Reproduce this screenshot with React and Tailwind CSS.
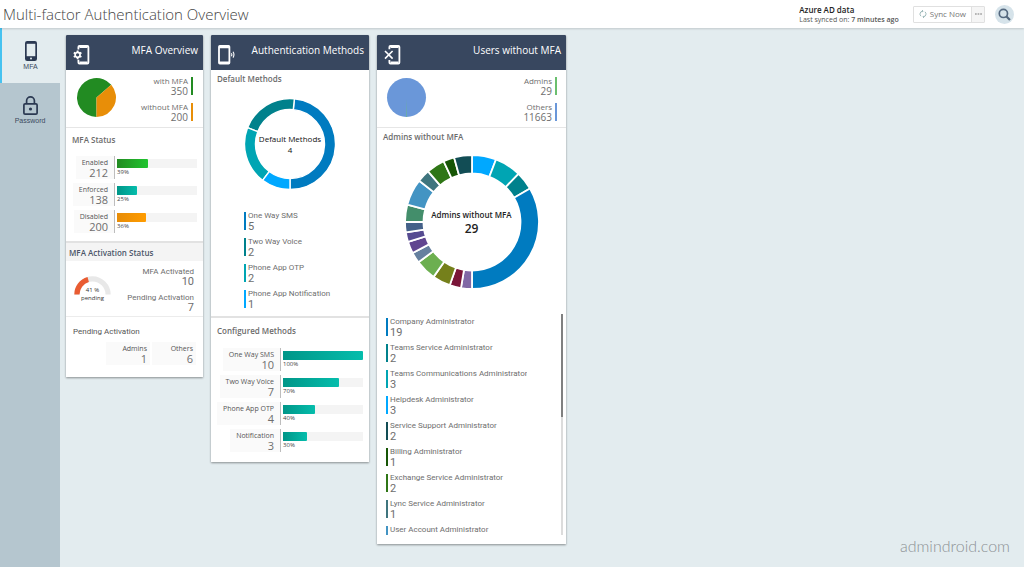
import React from "react";

const point = (cx, cy, r, deg) => {
  const a = ((deg - 90) * Math.PI) / 180;
  return `${(cx + r * Math.cos(a)).toFixed(2)} ${(cy + r * Math.sin(a)).toFixed(2)}`;
};

const ringPath = (c, outer, inner, from, to) => {
  const large = to - from > 180 ? 1 : 0;
  return `M${point(c, c, outer, from)} A${outer} ${outer} 0 ${large} 1 ${point(c, c, outer, to)} L${point(c, c, inner, to)} A${inner} ${inner} 0 ${large} 0 ${point(c, c, inner, from)} Z`;
};

const piePath = (c, r, from, to) =>
  `M${c} ${c} L${point(c, c, r, from)} A${r} ${r} 0 ${to - from > 180 ? 1 : 0} 1 ${point(c, c, r, to)} Z`;

const defaultMethods = [
  { name: "One Way SMS", value: 5, color: "#007bc0", from: 5.5, to: 180 },
  { name: "Two Way Voice", value: 2, color: "#00818c", from: 291, to: 365.5 },
  { name: "Phone App OTP", value: 2, color: "#00a5b3", from: 217, to: 291 },
  { name: "Phone App Notification", value: 1, color: "#00a8ff", from: 180, to: 217 },
];

const adminSlices = [
  ["#00a8ff", 0, 21],
  ["#00a5b3", 21, 44],
  ["#00818c", 44, 60],
  ["#007bc0", 60, 180],
  ["#8168a5", 180, 189.5],
  ["#7a1538", 189.5, 199.4],
  ["#75801b", 199.4, 215],
  ["#6caf50", 215, 233],
  ["#65809f", 233, 242.5],
  ["#614690", 242.5, 252.8],
  ["#564b91", 252.8, 261],
  ["#446189", 261, 270],
  ["#438e6b", 270, 285],
  ["#4394c3", 285, 308],
  ["#3f757e", 308, 319],
  ["#2f7616", 319, 335],
  ["#175606", 335, 344.5],
  ["#124d55", 344.5, 360],
];

const adminRoles = [
  { name: "Company Administrator", value: 19, color: "#007bc0" },
  { name: "Teams Service Administrator", value: 2, color: "#00818c" },
  { name: "Teams Communications Administrator", value: 3, color: "#00a5b3" },
  { name: "Helpdesk Administrator", value: 3, color: "#00a8ff" },
  { name: "Service Support Administrator", value: 2, color: "#124d55" },
  { name: "Billing Administrator", value: 1, color: "#175606" },
  { name: "Exchange Service Administrator", value: 2, color: "#2f7616" },
  { name: "Lync Service Administrator", value: 1, color: "#3f757e" },
  { name: "User Account Administrator", value: null, color: "#4394c3" },
];

const statusRows = [
  { name: "Enabled", value: 212, pct: 39, fill: "bg-linear-to-r from-[#228b22] to-[#1fc52f]" },
  { name: "Enforced", value: 138, pct: 25, fill: "bg-linear-to-r from-[#009688] to-[#05bdac]" },
  { name: "Disabled", value: 200, pct: 36, fill: "bg-linear-to-r from-[#e78c07] to-[#ff9c00]" },
];

const configuredRows = [
  { name: "One Way SMS", value: 10, pct: 100 },
  { name: "Two Way Voice", value: 7, pct: 70 },
  { name: "Phone App OTP", value: 4, pct: 40 },
  { name: "Notification", value: 3, pct: 30 },
].map((r) => ({ ...r, fill: "bg-linear-to-r from-[#009688] to-[#05bdac]" }));

function Card({ title, icon, width, children }) {
  return (
    <section className={`${width} shrink-0 bg-white shadow-[0_1px_2px_rgba(0,0,0,0.4)]`}>
      <header className="flex h-[35px] justify-between rounded-t-[1px] bg-[#38475f] pl-[7px] pr-[5px] text-white">
        <span className="pt-[10px]">{icon}</span>
        <h2 className="pt-2 text-[10px] leading-[14px]">{title}</h2>
      </header>
      {children}
    </section>
  );
}

function SectionTitle({ children }) {
  return <h3 className="text-[8px] font-semibold leading-[10px] text-[#6b6b6b]">{children}</h3>;
}

function Legend({ items }) {
  return (
    <dl className="flex flex-col items-end gap-[6px]">
      {items.map((i) => (
        <div key={i.name} className="flex h-5 items-start gap-[3px]">
          <div className="text-right">
            <dt className="text-[8px] leading-[8px]">{i.name}</dt>
            <dd className="text-[10px] leading-[13px]">{i.value}</dd>
          </div>
          <span className="h-[18px] w-[2px]" style={{ backgroundColor: i.color }} />
        </div>
      ))}
    </dl>
  );
}

function ValueList({ items }) {
  return (
    <ul className="flex flex-col gap-[6px] font-['Roboto',sans-serif]">
      {items.map((i) => (
        <li key={i.name} className="flex h-5 shrink-0 gap-[2px]">
          <span className="h-[18px] w-[2px] shrink-0" style={{ backgroundColor: i.color }} />
          <div className="whitespace-nowrap">
            <p className="text-[8px] leading-[8px]">{i.name}</p>
            <p className="text-[11px] leading-[13px]">{i.value}</p>
          </div>
        </li>
      ))}
    </ul>
  );
}

function BarRows({ rows, labelWidth }) {
  return (
    <ul className="flex flex-col gap-1">
      {rows.map((r) => (
        <li key={r.name} className="flex h-[23px]">
          <div className={`${labelWidth} flex shrink-0 justify-end border-r border-[#bdbdbd]`}>
            <div className="whitespace-nowrap bg-[#fafafa] pl-[6px] pr-[6px] pt-[2px] text-right">
              <p className="text-[7px] font-medium leading-[9px] text-[#555]">{r.name}</p>
              <p className="text-[11px] leading-[11px]">{r.value}</p>
            </div>
          </div>
          <div className="flex-1 pl-[2px] pt-[3px]">
            <div className="h-[9px] bg-[#f4f4f4]">
              <div className={`h-full rounded-r-[1px] ${r.fill}`} style={{ width: `${r.pct}%` }} />
            </div>
            <p className="text-[6px] leading-[9px] text-[#444]">{r.pct}%</p>
          </div>
        </li>
      ))}
    </ul>
  );
}

function GearPhone() {
  return (
    <svg width="17" height="20" viewBox="0 0 17 20" fill="none" stroke="#fff">
      <path d="M5.4 4.6V2Q5.4 1 6.4 1H14.4Q15.4 1 15.4 2V17.6Q15.4 18.6 14.4 18.6H6.4Q5.4 18.6 5.4 17.6V14.8" strokeWidth="1.8" />
      <path d="M6.5 2H14.5M6.5 17.4H14.5" strokeWidth="1.8" />
      <circle cx="4.6" cy="9.8" r="2.5" strokeWidth="1.7" />
      <path d="M4.6 5.4V7M4.6 12.6V14.2M.8 7.6L2.2 8.4M7 11.2L8.4 12M.8 12L2.2 11.2M7 8.4L8.4 7.6" strokeWidth="1.8" />
    </svg>
  );
}

function SignalPhone() {
  return (
    <svg width="17" height="20" viewBox="0 0 17 20" fill="none" stroke="#fff">
      <rect x="1" y="1" width="10.4" height="17.6" rx="0.8" strokeWidth="1.8" />
      <path d="M1 2.2H11.4M1 17.4H11.4" strokeWidth="2" />
      <path d="M13.4 8.2Q14.3 9.7 13.4 11.2M15 6.8Q16.9 9.7 15 12.6" strokeWidth="1.1" />
    </svg>
  );
}

function CrossPhone() {
  return (
    <svg width="17" height="20" viewBox="0 0 17 20" fill="none" stroke="#fff">
      <path d="M5.4 4.2V2Q5.4 1 6.4 1H14.4Q15.4 1 15.4 2V17.6Q15.4 18.6 14.4 18.6H6.4Q5.4 18.6 5.4 17.6V15" strokeWidth="1.8" />
      <path d="M6.5 2H14.5M6.5 17.4H14.5" strokeWidth="1.8" />
      <path d="M1 6L8.6 13.6M8.6 6L1 13.6" strokeWidth="1.6" />
    </svg>
  );
}

function Sidebar() {
  return (
    <nav className="w-[60px] shrink-0 bg-[#b5c6cf] font-['Liberation_Sans',Arial,sans-serif] text-[7px] leading-[8px] text-[#3c4a5e]">
      <a href="#mfa" className="flex h-[55px] flex-col items-center gap-[2px] border-l-2 border-[#46c2f0] bg-[#e3ecef] pr-[1px] pt-[13px]">
        <svg width="12" height="20" viewBox="0 0 12 20">
          <rect width="12" height="20" rx="2.2" fill="#2b3952" />
          <rect x="1.7" y="2.8" width="8.6" height="12.4" fill="#e3ecef" />
          <circle cx="6" cy="17.5" r="1" fill="#e3ecef" />
        </svg>
        MFA
      </a>
      <a href="#password" className="flex h-[55px] flex-col items-center gap-[2px] pt-[13px]">
        <svg width="15" height="19" viewBox="0 0 15 19" fill="none" stroke="#2b3952" strokeWidth="1.7">
          <rect x="0.9" y="7.9" width="13.2" height="10.2" rx="1.2" />
          <path d="M3.6 7.8V4.8A3.9 3.9 0 0 1 11.4 4.8V7.8" />
          <circle cx="7.5" cy="13" r="1.6" fill="#2b3952" stroke="none" />
        </svg>
        Password
      </a>
    </nav>
  );
}

function Header() {
  return (
    <header className="z-10 flex h-7 shrink-0 items-center bg-white pl-[3px] pr-[10px] shadow-[0_1px_2px_rgba(0,0,0,0.15)]">
      <h1 className="mr-auto text-[15px] font-[350] leading-5 text-[#444]">Multi-factor Authentication Overview</h1>
      <div className="mr-[14px] text-[7px] leading-[9px] text-[#555]">
        <p className="text-[8px] font-semibold leading-[10px] text-[#222]">Azure AD data</p>
        <p>
          Last synced on: <span className="font-semibold">7 minutes ago</span>
        </p>
      </div>
      <div className="mr-[10px] flex h-[17px] rounded-[1px] border border-[#e0e0e0] text-[8px] text-[#777]">
        <button type="button" className="flex items-center gap-[3px] px-[5px]">
          <svg width="8" height="8" viewBox="0 0 8 8" fill="none" stroke="#8aa" strokeWidth="0.8">
            <path d="M2 6.2A2.9 2.9 0 0 1 3.8 1.1M2.9 0L4.1 1.1L3 2.3M6 1.8A2.9 2.9 0 0 1 4.2 6.9M5.1 8L3.9 6.9L5 5.7" />
          </svg>
          Sync Now
        </button>
        <button type="button" aria-label="More" className="flex w-[13px] items-center justify-center border-l border-[#e0e0e0] bg-[#f5f5f5]">
          <svg width="7" height="2" viewBox="0 0 7 2" fill="#777">
            <rect y="0.5" width="1.7" height="1" />
            <rect x="2.6" y="0.5" width="1.7" height="1" />
            <rect x="5.2" y="0.5" width="1.7" height="1" />
          </svg>
        </button>
      </div>
      <button type="button" aria-label="Search" className="flex size-[19px] items-center justify-center rounded-full bg-[#d6e3ea]">
        <svg width="13" height="13" viewBox="0 0 13 13" fill="none" stroke="#54687f">
          <circle cx="5.4" cy="5.4" r="4.1" strokeWidth="1.7" />
          <path d="M8.5 8.5L12 12" strokeWidth="2.2" />
        </svg>
      </button>
    </header>
  );
}

export default function App() {
  return (
    <div className="flex min-h-screen flex-col bg-[#e3ecef] font-['Open_Sans',sans-serif] text-[#6e6e6e]">
      <Header />
      <div className="flex flex-1">
        <Sidebar />
        <main className="flex flex-1 items-start gap-2 pl-[6px] pr-[14px] pt-[7px]">
          <Card title="MFA Overview" icon={<GearPhone />} width="w-[137px]">
            <div className="flex justify-between border-b border-[#e6e6e6] px-[10px] pb-1 pt-[7px]">
              <svg width="41" height="41" viewBox="0 0 41 41">
                <path d={piePath(20.5, 19.5, 180, 409)} fill="#228b22" />
                <path d={piePath(20.5, 19.5, 49, 180)} fill="#e88e08" />
              </svg>
              <Legend
                items={[
                  { name: "with MFA", value: 350, color: "#228b22" },
                  { name: "without MFA", value: 200, color: "#e88e08" },
                ]}
              />
            </div>
            <div className="border-b-2 border-[#e2e2e2] pb-2 pl-[6px] pr-[6px] pt-[7px]">
              <SectionTitle>MFA Status</SectionTitle>
              <div className="pt-[11px]">
                <BarRows rows={statusRows} labelWidth="w-[43px]" />
              </div>
            </div>
            <h3 className="bg-[#f4f4f4] pb-[3px] pl-[3px] pt-[5px] text-[8px] font-semibold leading-[10px] text-[#4c5669]">
              MFA Activation Status
            </h3>
            <div className="flex justify-between border-b border-[#ececec] pb-[3px] pl-2 pr-[9px] pt-[6px] font-['Roboto',sans-serif]">
              <div className="pt-[9px]">
                <div className="relative">
                  <svg width="37" height="26" viewBox="0 0 37 26">
                    <path d="M0.3 18.5A18.2 18.2 0 0 1 36.7 18.5H31.5A13 13 0 0 0 5.5 18.5Z" fill="#e8e8e8" />
                    <path d="M0.3 18.5A18.2 18.2 0 0 1 13.5 1L14.9 6A13 13 0 0 0 5.5 18.5Z" fill="#e95c32" />
                  </svg>
                  <p className="absolute inset-x-0 top-[10px] text-center font-['Open_Sans',sans-serif] text-[6px] leading-[8px] text-[#333]">
                    41 %
                    <br />
                    pending
                  </p>
                </div>
              </div>
              <dl className="flex flex-col gap-[6px] text-right">
                <div>
                  <dt className="text-[8px] leading-[9px]">MFA Activated</dt>
                  <dd className="text-[11px] leading-[11px]">10</dd>
                </div>
                <div>
                  <dt className="text-[8px] leading-[9px]">Pending Activation</dt>
                  <dd className="text-[11px] leading-[11px]">7</dd>
                </div>
              </dl>
            </div>
            <div className="pb-3 pl-[7px] pr-[7px] pt-[10px] font-['Roboto',sans-serif]">
              <h3 className="text-[8px] leading-[10px] text-[#555]">Pending Activation</h3>
              <dl className="mt-[5px] flex justify-end gap-[2px] font-['Open_Sans',sans-serif]">
                {[
                  ["Admins", 1],
                  ["Others", 6],
                ].map(([name, value]) => (
                  <div key={name} className="h-[23px] w-11 bg-[#fafafa] pr-[3px] pt-[2px] text-right">
                    <dt className="text-[7px] font-medium leading-[9px] text-[#555]">{name}</dt>
                    <dd className="text-[11px] leading-[12px]">{value}</dd>
                  </div>
                ))}
              </dl>
            </div>
          </Card>

          <Card title="Authentication Methods" icon={<SignalPhone />} width="w-[158px]">
            <div className="border-b-2 border-[#e2e2e2] px-[6px] pb-[6px] pt-1">
              <SectionTitle>Default Methods</SectionTitle>
              <div className="relative mt-[14px] flex justify-center">
                <svg width="92" height="92" viewBox="0 0 92 92" stroke="#fff" strokeWidth="1.4">
                  {defaultMethods.map((m) => (
                    <path key={m.name} d={ringPath(46, 45.5, 34.5, m.from, m.to)} fill={m.color} />
                  ))}
                </svg>
                <p className="absolute inset-0 flex flex-col items-center justify-center text-[8px] leading-[11px] text-[#111]">
                  Default Methods
                  <span>4</span>
                </p>
              </div>
              <div className="pl-[27px] pt-[22px]">
                <ValueList items={defaultMethods} />
              </div>
            </div>
            <div className="px-[6px] pb-[10px] pt-2">
              <SectionTitle>Configured Methods</SectionTitle>
              <div className="pt-3">
                <BarRows rows={configuredRows} labelWidth="w-[64px]" />
              </div>
            </div>
          </Card>

          <Card title="Users without MFA" icon={<CrossPhone />} width="w-[189px]">
            <div className="flex justify-between border-b border-[#e6e6e6] px-[9px] pb-1 pt-[7px]">
              <svg width="41" height="41" viewBox="0 0 41 41">
                <circle cx="20.5" cy="20.5" r="19.5" fill="#6a97d9" />
                <path d="M20 40L20.3 22L20.8 40Z" fill="#6bb594" />
              </svg>
              <Legend
                items={[
                  { name: "Admins", value: 29, color: "#6abf6f" },
                  { name: "Others", value: 11663, color: "#6a97d9" },
                ]}
              />
            </div>
            <div className="px-[6px] pt-1">
              <SectionTitle>Admins without MFA</SectionTitle>
              <div className="relative mt-[13px] flex justify-center">
                <svg width="134" height="134" viewBox="0 0 134 134" stroke="#fff" strokeWidth="1.8">
                  {adminSlices.map(([color, from, to]) => (
                    <path key={from} d={ringPath(67, 67, 48.5, from, to)} fill={color} />
                  ))}
                </svg>
                <p className="absolute inset-0 flex flex-col items-center justify-center text-[8px] font-semibold leading-[14px] text-[#222]">
                  Admins without MFA
                  <span className="text-[12px]">29</span>
                </p>
              </div>
            </div>
            <div className="mt-[25px] flex justify-between pb-[9px] pl-[9px] pr-[3px]">
              <div className="h-[221px] overflow-hidden pt-1">
                <ValueList items={adminRoles} />
              </div>
              <div className="w-[2px] bg-[#dcdcdc]">
                <div className="h-[103px] bg-[#808080]" />
              </div>
            </div>
          </Card>

          <a href="#home" className="mb-3 ml-auto self-end font-['Lato',sans-serif] text-[16px] font-light leading-[18px] text-[#8d9295]">
            admindroid.com
          </a>
        </main>
      </div>
    </div>
  );
}
